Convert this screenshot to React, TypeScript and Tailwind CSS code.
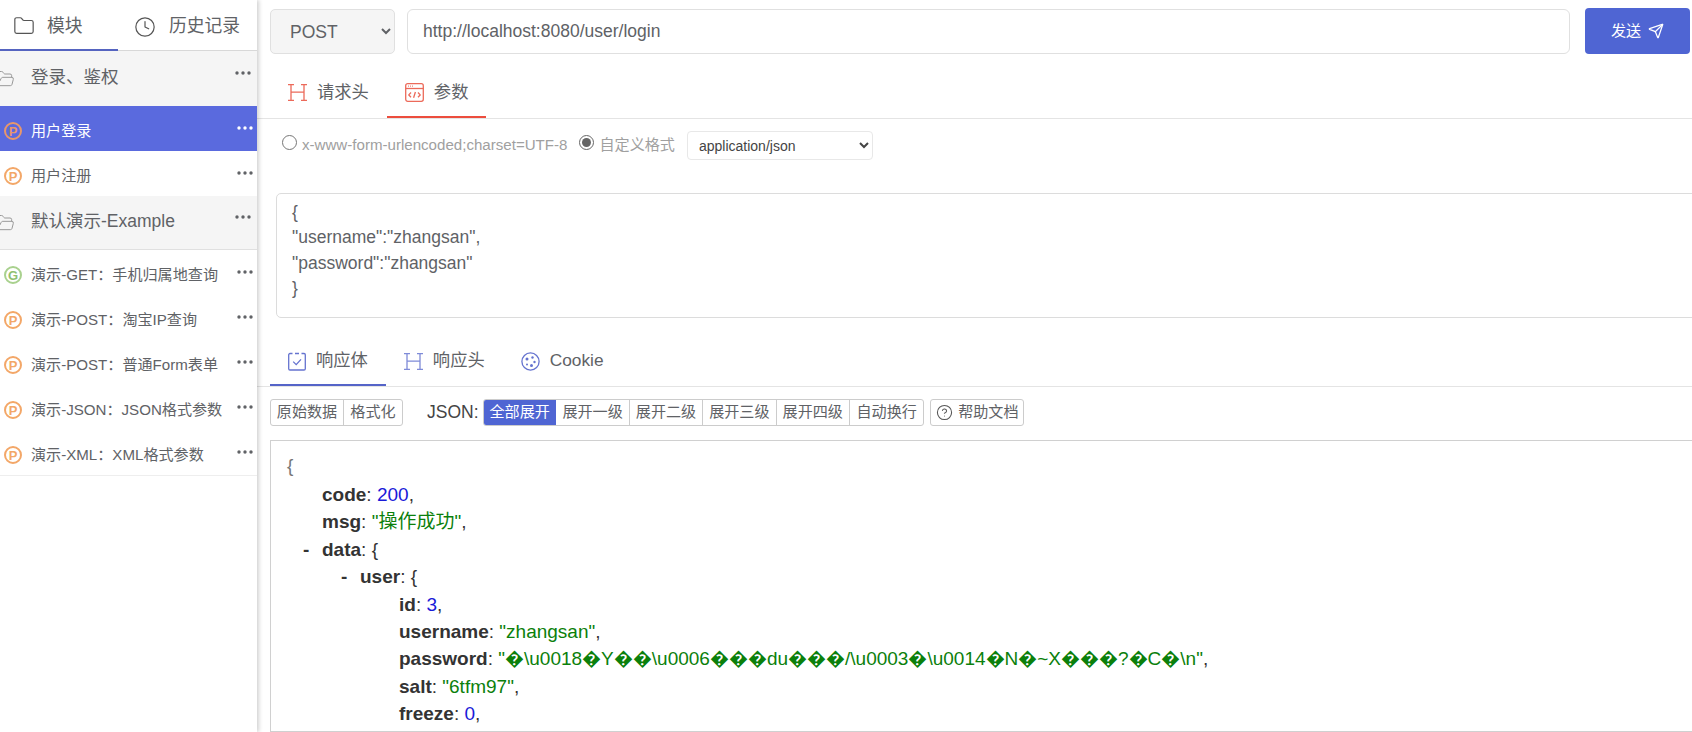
import { Folder, Clock, FolderOpen, Send, CircleHelp } from 'lucide-react';

const FONT = "[font-family:'Liberation_Sans','Noto_Sans_CJK_SC',sans-serif]";

const EXPAND_BUTTONS = ['全部展开', '展开一级', '展开二级', '展开三级', '展开四级', '自动换行'];

function Dots({ className }: { className: string }) {
  return (
    <svg width="16" height="4" viewBox="0 0 16 4" className={className}>
      <circle cx="2" cy="2" r="1.7" fill="currentColor" />
      <circle cx="8" cy="2" r="1.7" fill="currentColor" />
      <circle cx="14" cy="2" r="1.7" fill="currentColor" />
    </svg>
  );
}

function MethodBadge({ letter, active }: { letter: string; active?: boolean }) {
  const color =
    letter === 'G'
      ? 'border-[#a9d18e] text-[#8fc070]'
      : active
        ? 'border-[#e8976b] text-[#e8976b]'
        : 'border-[#f3a768] text-[#f3a768]';
  return (
    <span
      className={`mt-[5px] flex h-[18px] w-[18px] shrink-0 items-center justify-center rounded-full border-2 text-[13px] font-bold leading-none ${color}`}
    >
      {letter}
    </span>
  );
}

function GroupRow({ label, last }: { label: string; last?: boolean }) {
  return (
    <div
      className={`flex items-center bg-[#f5f5f5] pr-[5px] ${last ? 'h-[54px] border-b border-[#e0e0e0]' : 'h-[55px]'}`}
    >
      <FolderOpen size={20} strokeWidth={1.2} className="ml-[-5px] mr-[16px] shrink-0 text-[#999]" />
      <span className="mb-[2px] flex-1 text-[17.5px] text-[#606266]">{label}</span>
      <Dots className="mb-[12px] mr-[1px] text-[#606266]" />
    </div>
  );
}

function ApiRow({ letter, label, active }: { letter: string; label: string; active?: boolean }) {
  return (
    <div
      className={`flex h-[45px] items-center pl-[4px] pr-[4px] ${active ? 'bg-[#5a6ade] text-white' : 'text-[#606266]'}`}
    >
      <MethodBadge letter={letter} active={active} />
      <span className="ml-[9px] mt-[5px] flex-1 self-center whitespace-nowrap text-[15.1px]">{label}</span>
      <Dots className={`mb-[1px] ${active ? 'text-white' : 'text-[#606266]'}`} />
    </div>
  );
}

function Sidebar() {
  return (
    <aside className="z-10 h-full w-[257px] shrink-0 bg-white shadow-[2px_0_4px_rgba(0,0,0,0.18)]">
      <div className="flex h-[51px] border-b border-[#d8d8d8]">
        <div className="-mb-px flex w-[118px] items-center border-b-2 border-[#5564c0] pl-[13px] pt-[3px] text-[#606266]">
          <Folder size={22} strokeWidth={1.3} className="text-[#555]" />
          <span className="ml-[12px] text-[17.8px]">模块</span>
        </div>
        <div className="flex flex-1 items-center pl-[16px] pt-[3px] text-[#606266]">
          <Clock size={22} strokeWidth={1.3} className="text-[#555]" />
          <span className="ml-[13px] text-[17.8px]">历史记录</span>
        </div>
      </div>
      <GroupRow label="登录、鉴权" />
      <ApiRow letter="P" label="用户登录" active />
      <ApiRow letter="P" label="用户注册" />
      <GroupRow label="默认演示-Example" last />
      <ApiRow letter="G" label="演示-GET：手机归属地查询" />
      <ApiRow letter="P" label="演示-POST：淘宝IP查询" />
      <ApiRow letter="P" label="演示-POST：普通Form表单" />
      <ApiRow letter="P" label="演示-JSON：JSON格式参数" />
      <div className="border-b border-[#eeeeee]">
        <ApiRow letter="P" label="演示-XML：XML格式参数" />
      </div>
    </aside>
  );
}

function HIcon({ color }: { color: string }) {
  return (
    <svg width="19" height="17" viewBox="0 0 19 17" fill="none" stroke={color} strokeWidth="1.3">
      <path d="M0 .7h6M3 .7v15.6M0 16.3h6M13 .7h6M16 .7v15.6M13 16.3h6M3 8.2h13" />
    </svg>
  );
}

function ParamIcon() {
  return (
    <svg width="19" height="19" viewBox="0 0 19 19" fill="none" stroke="#ec6a5a" strokeWidth="1.3">
      <rect x=".7" y=".7" width="17.6" height="17.6" rx="2" />
      <path d="M.7 5.5h17.6" />
      <path d="M3 3.1h.8M5 3.1h.8M7 3.1h.8" strokeWidth="1.2" />
      <path d="M6 9.5 3.8 11.9 6 14.3M13 9.5l2.2 2.4L13 14.3M10.4 9 8.6 14.8" />
    </svg>
  );
}

function BodyIcon() {
  return (
    <svg width="18" height="19" viewBox="0 0 18 19" fill="none" stroke="#6573cf" strokeWidth="1.3">
      <path d="M4.5 1.5H2a1.3 1.3 0 0 0-1.3 1.3v13.9A1.3 1.3 0 0 0 2 18h14a1.3 1.3 0 0 0 1.3-1.3V2.8A1.3 1.3 0 0 0 16 1.5h-2.5M7 1.5h4" />
      <path d="m5.2 9.6 3 3 4.8-5.2" />
    </svg>
  );
}

function CookieIcon() {
  return (
    <svg width="19" height="19" viewBox="0 0 19 19" fill="none" stroke="#6573cf" strokeWidth="1.3">
      <circle cx="9.5" cy="9.5" r="8.6" />
      <g fill="#6573cf" stroke="none">
        <circle cx="6" cy="7" r="1.5" />
        <circle cx="11.5" cy="5.5" r="1.2" />
        <circle cx="13.5" cy="10" r="1.2" />
        <circle cx="10.5" cy="13.5" r="1.5" />
        <circle cx="6" cy="12.5" r="1" />
      </g>
    </svg>
  );
}

function Tab({
  icon,
  label,
  offset,
  activeColor,
}: {
  icon: React.ReactNode;
  label: string;
  offset: string;
  activeColor?: string;
}) {
  return (
    <div
      className={`flex h-full items-center gap-[10px] border-b-2 px-[18px] ${offset} ${activeColor ?? 'border-transparent'}`}
    >
      {icon}
      <span className="text-[17.3px] text-[#606266]">{label}</span>
    </div>
  );
}

function Key({ children }: { children: React.ReactNode }) {
  return <span className="font-bold text-[#333]">{children}</span>;
}

function Num({ children }: { children: React.ReactNode }) {
  return <span className="text-[#1a1ad8]">{children}</span>;
}

function Str({ children }: { children: React.ReactNode }) {
  return <span className="text-[#0b800b]">{children}</span>;
}

function Minus() {
  return <span className="inline-block w-[19px] font-bold text-[#333]">-</span>;
}

function JsonView() {
  return (
    <div className="mr-[-10px] flex-1 border border-[#d0d0d0] pl-[16px] pt-[14px] text-[19px] leading-[27.4px] text-[#333]">
      <div className="h-[26px] leading-[22px] text-[#777]">{'{'}</div>
      <div className="pl-[35px]">
        <Key>code</Key>: <Num>200</Num>,
      </div>
      <div className="pl-[35px]">
        <Key>msg</Key>: <Str>"操作成功"</Str>,
      </div>
      <div className="pl-[16px]">
        <Minus />
        <Key>data</Key>: {'{'}
      </div>
      <div className="pl-[54px]">
        <Minus />
        <Key>user</Key>: {'{'}
      </div>
      <div className="pl-[112px]">
        <Key>id</Key>: <Num>3</Num>,
      </div>
      <div className="pl-[112px]">
        <Key>username</Key>: <Str>"zhangsan"</Str>,
      </div>
      <div className="whitespace-nowrap pl-[112px]">
        <Key>password</Key>:{' '}
        <Str>"�\u0018�Y��\u0006���du���/\u0003�\u0014�N�~X���?�C�\n"</Str>,
      </div>
      <div className="pl-[112px]">
        <Key>salt</Key>: <Str>"6tfm97"</Str>,
      </div>
      <div className="pl-[112px]">
        <Key>freeze</Key>: <Num>0</Num>,
      </div>
    </div>
  );
}

export default function App() {
  return (
    <div className={`flex h-screen w-full overflow-hidden bg-white ${FONT}`}>
      <Sidebar />
      <main className="flex h-full min-w-0 flex-1 flex-col">
        <div className="flex h-[54px] shrink-0 items-end gap-[12px] pl-[13px] pr-[2px]">
          <select className="h-[45px] w-[125px] rounded-[5px] border border-[#e0e0e0] bg-[#f5f5f5] pl-[15px] text-[17.5px] text-[#606266]">
            <option>POST</option>
          </select>
          <div className="flex h-[45px] flex-1 items-center rounded-[6px] border border-[#e0e0e0] pl-[15px] text-[17.5px] text-[#606266]">
            http://localhost:8080/user/login
          </div>
          <button className="ml-[3px] flex h-[46px] w-[105px] items-center justify-center gap-[7px] rounded-[4px] bg-[#4f65d3] text-[15.1px] text-white">
            发送
            <Send size={16} strokeWidth={1.9} />
          </button>
        </div>

        <div className="flex h-[65px] shrink-0 border-b border-[#e4e4e4] pl-[13px]">
          <Tab icon={<HIcon color="#ec6a5a" />} label="请求头" offset="pt-[15px]" />
          <Tab icon={<ParamIcon />} label="参数" offset="pt-[15px]" activeColor="border-[#ec4d3d]" />
        </div>

        <div className="flex h-[74px] shrink-0 items-start pl-[25px] pt-[12px] text-[#a0a0a0]">
          <input type="radio" name="format" className="mt-[4px] h-[15px] w-[15px] accent-[#666]" readOnly />
          <span className="ml-[5px] mt-[3px] text-[15.1px]">x-www-form-urlencoded;charset=UTF-8</span>
          <input
            type="radio"
            name="format"
            defaultChecked
            className="ml-[12px] mt-[4px] h-[15px] w-[15px] accent-[#666]"
          />
          <span className="ml-[5px] mt-[3px] text-[15.1px]">自定义格式</span>
          <select className="ml-[12px] h-[29px] w-[186px] rounded-[4px] border border-[#e8e8e8] bg-white pl-[7px] text-[14px] text-[#444]">
            <option>application/json</option>
          </select>
        </div>

        <div className="ml-[19px] mr-[-10px] h-[125px] shrink-0 rounded-[5px] border border-[#dcdcdc] pl-[15px] pt-[6px] text-[17.5px] leading-[25.4px] text-[#606266]">
          <div>{'{'}</div>
          <div>"username":"zhangsan",</div>
          <div>"password":"zhangsan"</div>
          <div>{'}'}</div>
        </div>

        <div className="mt-[12px] flex h-[57px] shrink-0 border-b border-[#e4e4e4] pl-[13px]">
          <Tab icon={<BodyIcon />} label="响应体" offset="pt-[8px]" activeColor="border-[#5564c8]" />
          <Tab icon={<HIcon color="#7f8bd8" />} label="响应头" offset="pt-[8px]" />
          <Tab icon={<CookieIcon />} label="Cookie" offset="pt-[8px]" />
        </div>

        <div className="flex h-[53px] shrink-0 items-start pl-[13px] pt-[12px] text-[15.1px] text-[#606266]">
          <div className="flex h-[27px] overflow-hidden rounded-[3px] border border-[#ccc]">
            <span className="flex w-[73px] items-center justify-center border-r border-[#ccc]">原始数据</span>
            <span className="flex w-[58px] items-center justify-center">格式化</span>
          </div>
          <span className="ml-[24px] flex h-[27px] w-[56px] items-center text-[17.5px] text-[#444]">JSON:</span>
          <div className="flex h-[27px] overflow-hidden rounded-[3px] border border-[#ccc]">
            {EXPAND_BUTTONS.map((label, i) => (
              <span
                key={label}
                className={`flex w-[73.4px] items-center justify-center ${i === 0 ? '-my-px -ml-px bg-[#4f65d3] text-white' : ''} ${i > 0 && i < 5 ? 'border-r border-[#ccc]' : ''}`}
              >
                {label}
              </span>
            ))}
          </div>
          <div className="ml-[6px] flex h-[27px] w-[94px] items-center justify-center gap-[5px] rounded-[3px] border border-[#ccc]">
            <CircleHelp size={17} strokeWidth={1.5} className="text-[#555]" />
            帮助文档
          </div>
        </div>

        <div className="flex min-h-0 flex-1 pl-[13px]">
          <JsonView />
        </div>
      </main>
    </div>
  );
}
